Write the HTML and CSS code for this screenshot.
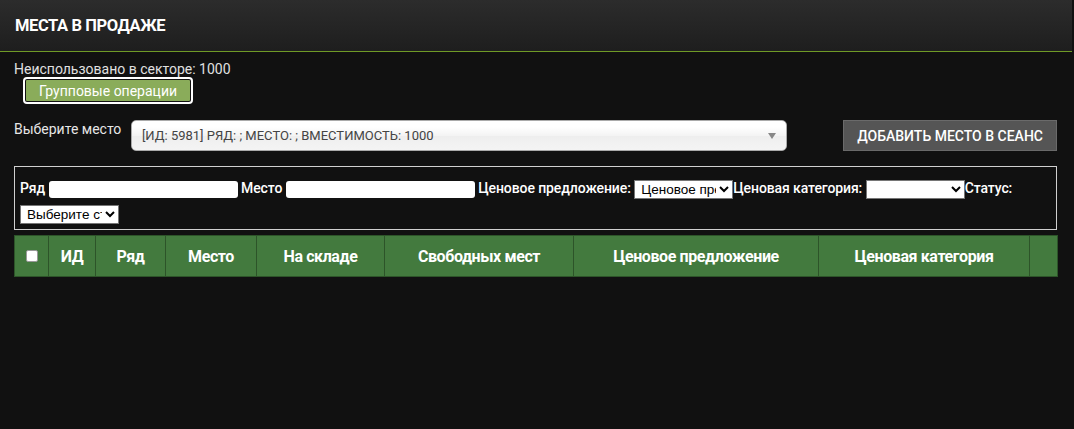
FILE: index.html
```html
<!DOCTYPE html>
<html lang="ru">
<head>
    <meta charset="UTF-8">
    <title>Места в продаже</title>
    <link rel="stylesheet" href="styles.css">
</head>
<body>
    <div class="header">
        <h1 class="title">МЕСТА В ПРОДАЖЕ</h1>
    </div>

    <div class="content">
        <div class="unused">Неиспользовано в секторе: 1000</div>
        <button class="group-btn">Групповые операции</button>

        <!-- Place picker -->
        <div class="place-row">
            <label class="place-label">Выберите место</label>
            <div class="chosen">
                <span>[ИД: 5981] РЯД: ; МЕСТО: ; ВМЕСТИМОСТЬ: 1000</span>
                <b class="chosen-arrow"></b>
            </div>
            <button class="add-btn">ДОБАВИТЬ МЕСТО В СЕАНС</button>
        </div>

        <!-- Filters -->
        <div class="filters">
            <label>Ряд</label> <input type="text" class="f-input">
            <label>Место</label> <input type="text" class="f-input">
            <label>Ценовое предложение:</label> <select class="f-select"><option>Ценовое предложение</option></select><label>Ценовая категория:</label> <select class="f-select"><option></option></select><label>Статус:</label>
            <br>
            <select class="f-select"><option>Выберите статус</option></select>
        </div>

        <table class="seats">
            <thead>
                <tr>
                    <th class="c-check"><input type="checkbox" class="check"></th>
                    <th class="c-id">ИД</th>
                    <th class="c-row">Ряд</th>
                    <th class="c-place">Место</th>
                    <th class="c-stock">На складе</th>
                    <th class="c-free">Свободных мест</th>
                    <th class="c-offer">Ценовое предложение</th>
                    <th class="c-cat">Ценовая категория</th>
                    <th class="c-last"></th>
                </tr>
            </thead>
        </table>
    </div>
</body>
</html>
```

FILE: styles.css
```css
body {
    margin: 0;
    background-color: #111111;
    font-family: Roboto, "Liberation Sans", sans-serif;
    color: #e6e6e6;
}
.header {
    height: 51px;
    padding-left: 15px;
    background: linear-gradient(#2c2c2c, #1e1e1e);
    border-bottom: 1px solid #6f9a26;
    margin-right: 2px;
    display: flex;
    align-items: center;
}
.title {
    margin: 0;
    font-size: 16.5px;
    font-weight: bold;
    color: #fff;
    letter-spacing: -0.4px;
}
.content {
    padding: 0 17px 0 14px;
}
.unused {
    margin-top: 9px;
    font-size: 14px;
    line-height: 16px;
    color: #e0e0e0;
}
.group-btn {
    margin: 0 0 0 9px;
    display: block;
    width: 170px;
    height: 27px;
    padding: 0;
    background-color: #8aac5a;
    color: #fff;
    font-family: Roboto, sans-serif;
    font-size: 14px;
    border: 3px solid #111;
    border-radius: 4px;
    outline: 2px solid #fff;
    outline-offset: -2px;
}
.place-row {
    display: flex;
    align-items: flex-start;
    margin-top: 16px;
}
.place-label {
    width: 117px;
    font-size: 14px;
    line-height: 16px;
    margin-top: 1px;
    color: #e6e6e6;
}
.chosen {
    width: 645px;
    height: 29px;
    border: 1px solid #aaa;
    border-radius: 5px;
    background: linear-gradient(#ffffff 20%, #f4f4f4 50%, #eeeeee 52%, #f4f4f4);
    display: flex;
    align-items: center;
    padding-left: 10px;
    font-size: 13px;
    color: #444;
}
.chosen span {
    flex: 1;
}
.chosen-arrow {
    width: 0;
    height: 0;
    margin-right: 10px;
    border-left: 4px solid transparent;
    border-right: 4px solid transparent;
    border-top: 6px solid #888;
}
.add-btn {
    margin-left: 56px;
    width: 214px;
    height: 31px;
    background-color: #555;
    border: 1px solid #6a6a6a;
    color: #fff;
    font-family: Roboto, sans-serif;
    font-size: 14px;
    font-weight: 500;
    padding: 0;
}
.filters {
    margin-top: 15px;
    border: 1px solid #d0d0d0;
    padding: 9px 5px 3px 5px;
    line-height: 25px;
    font-size: 14px;
    color: #fff;
}
.filters label {
    font-weight: 500;
    letter-spacing: -0.1px;
}
.f-input {
    width: 189px;
    height: 17px;
    border: none;
    border-radius: 3px;
    padding: 0;
    vertical-align: middle;
}
.f-select {
    width: 99px;
    height: 19px;
    padding-left: 2px;
    font-family: "Liberation Sans", Arial, sans-serif;
    font-size: 13.5px;
    vertical-align: middle;
    background: #fff;
}
.seats {
    margin-top: 5px;
    width: 1043px;
    border-collapse: collapse;
    table-layout: fixed;
}
.seats th {
    height: 40px;
    background-color: #437a3e;
    border: 1px solid #2d5429;
    color: #fff;
    font-size: 16px;
    font-weight: bold;
    letter-spacing: -0.4px;
    padding: 0;
}
.c-check { width: 33px; }
.c-id { width: 46px; }
.c-row { width: 69px; }
.c-place { width: 90px; }
.c-stock { width: 127px; }
.c-free { width: 188px; }
.c-offer { width: 244px; }
.c-cat { width: 210px; }
.c-last { width: 27px; }
.check {
    appearance: none;
    width: 12px;
    height: 12px;
    margin: 0 0 3px 0;
    background: #fff;
    border: 1px solid #999;
    border-radius: 2px;
    vertical-align: middle;
}
```
